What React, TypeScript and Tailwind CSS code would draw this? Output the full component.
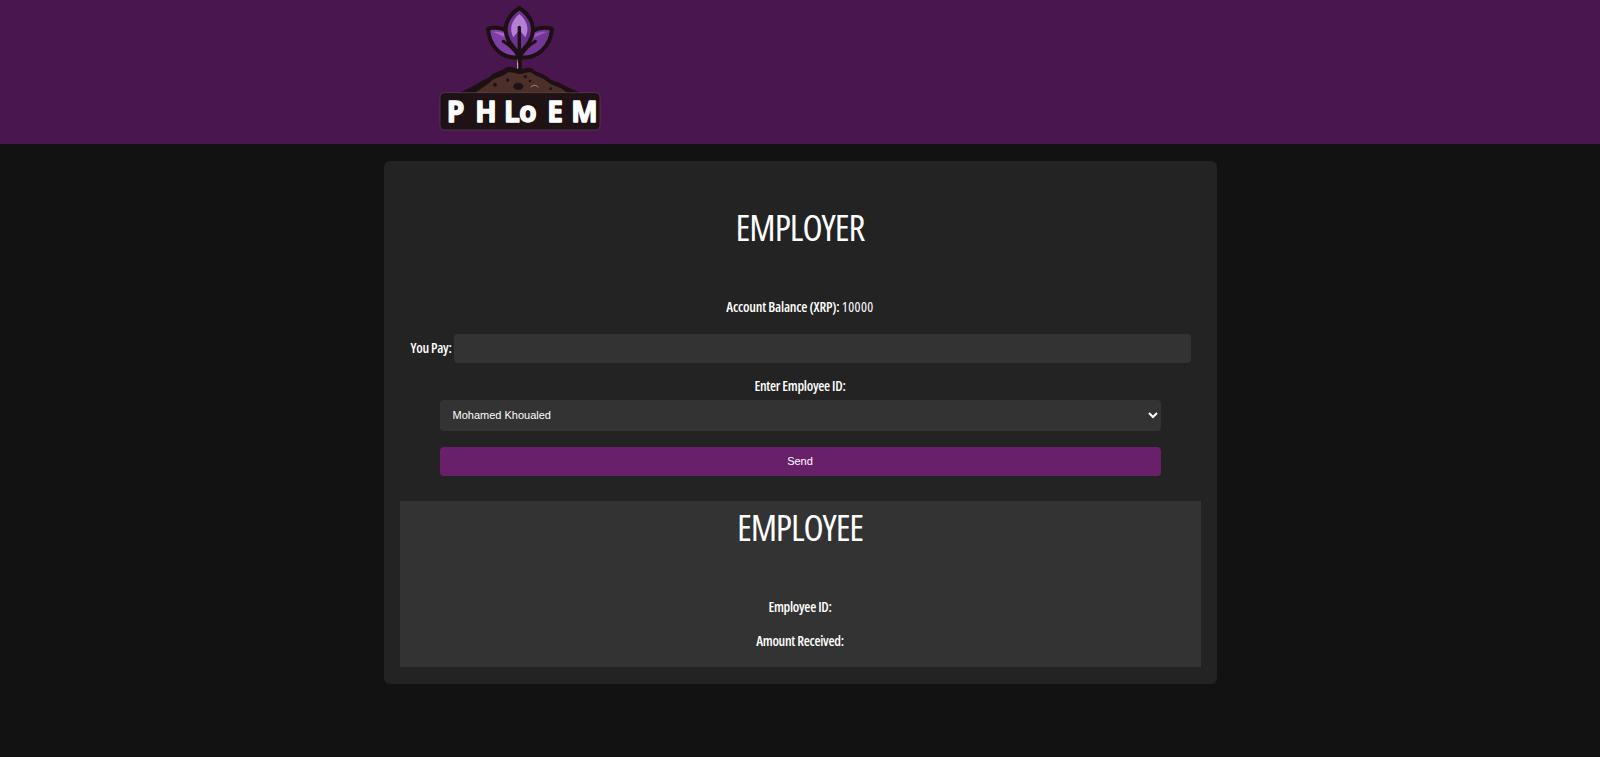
function Logo() {
  return (
    <svg width="200" height="144" viewBox="0 0 600 432" className="block">
      {/* soil mound */}
      <path d="M112 284 C135 268 155 262 175 250 C188 238 203 238 214 226 C226 214 245 216 258 202 C270 196 284 206 298 208 C310 210 322 198 338 206 C350 220 368 218 384 232 C397 246 414 244 432 256 C450 266 468 270 488 284 Z" fill="#1c1013" />
      <path d="M162 282 C186 262 203 256 220 238 C236 230 248 230 262 218 C275 214 288 222 300 222 C315 222 325 212 338 220 C350 232 365 230 380 244 C394 256 410 258 428 268 L444 282 Z" fill="#4d2f2a" />
      <ellipse cx="295" cy="259" rx="15" ry="11" fill="#1f1214" />
      <circle cx="225" cy="254" r="6" fill="#1f1214" />
      <circle cx="263" cy="240" r="5" fill="#1f1214" />
      <circle cx="316" cy="230" r="5" fill="#1f1214" />
      <circle cx="330" cy="243" r="4" fill="#1f1214" />
      <circle cx="392" cy="266" r="4" fill="#1f1214" />
      <path d="M332 262 C338 254 348 254 355 262" fill="none" stroke="#b8a398" strokeWidth="2.5" />
      {/* stem */}
      <path d="M298 150 L298 210" stroke="#1c1013" strokeWidth="15" />
      <path d="M293 178 L293 206" stroke="#d9c9cf" strokeWidth="3" />
      {/* side leaves */}
      <path d="M204 86 C250 74 292 100 298 172 C245 178 208 140 204 86 Z" fill="#7f3da6" stroke="#1c1013" strokeWidth="12" strokeLinejoin="round" />
      <path d="M396 86 C350 74 304 100 298 172 C352 178 392 140 396 86 Z" fill="#733598" stroke="#1c1013" strokeWidth="12" strokeLinejoin="round" />
      <path d="M220 96 C245 92 268 104 280 128 C258 112 238 104 220 96 Z" fill="#a866cc" />
      <path d="M380 96 C355 92 332 104 320 128 C342 112 362 104 380 96 Z" fill="#9a58bd" />
      {/* centre leaf */}
      <path d="M298 24 C335 48 350 85 330 122 C320 140 306 152 298 162 C290 152 276 140 266 122 C246 85 261 48 298 24 Z" fill="#6b318f" stroke="#1c1013" strokeWidth="12" strokeLinejoin="round" />
      <path d="M298 42 C320 60 330 85 316 112 L298 90 L280 112 C266 85 276 60 298 42 Z" fill="#b67fd6" />
      {/* veins */}
      <path d="M298 82 L298 185" stroke="#1c1013" strokeWidth="10" strokeLinecap="round" />
      <path d="M298 174 C285 150 268 134 250 124 M298 174 C311 150 328 134 346 124" fill="none" stroke="#1c1013" strokeWidth="9" strokeLinecap="round" />
      {/* name plate */}
      <rect x="60" y="278" width="480" height="112" rx="12" fill="#1f1214" stroke="#5a4a55" strokeWidth="2" />
      <text x="80 166 252 298 382 454" y="366" fill="#ffffff" stroke="#ffffff" strokeWidth="4" strokeLinejoin="round" fontFamily="'Open Sans', sans-serif" fontWeight="700" fontSize="84" className="[font-stretch:90%]">
        PHLoEM
      </text>
    </svg>
  );
}

export default function App() {
  return (
    <div className="min-h-screen bg-[#121212] text-white font-['Open_Sans',sans-serif] [font-stretch:75%]">
      <header className="h-[144px] bg-[#4a164f] pl-[420px]">
        <Logo />
      </header>

      <main className="w-[833px] mx-auto mt-[17px] bg-[#232323] rounded-md px-4 pt-4 pb-[17px] flex flex-col items-center">
        <h1 className="mt-[22px] text-[37px] leading-[55px] tracking-[-1px]">EMPLOYER</h1>
        <p className="mt-[43px] text-sm font-semibold leading-5 tracking-[-0.2px]">
          Account Balance (XRP): <span className="font-normal tracking-[0.4px]">10000</span>
        </p>

        <div className="mt-[17px] w-full flex items-center pl-[11px] pr-[10px]">
          <label className="text-sm font-semibold mr-[2px] mb-[2px] whitespace-nowrap tracking-[-0.3px]">You Pay:</label>
          <input type="text" className="flex-1 h-[29px] rounded bg-[#333333] outline-none px-3" />
        </div>

        <label className="mt-[13px] text-sm font-semibold leading-5 tracking-[-0.3px]">Enter Employee ID:</label>
        <select
          defaultValue="Mohamed Khoualed"
          className="mt-[4px] w-[721px] h-[31px] rounded bg-[#333333] px-[9px] pb-[2px] text-[11px] [font-stretch:100%] font-['Liberation_Sans',sans-serif] text-white outline-none"
        >
          <option>Mohamed Khoualed</option>
        </select>

        <button className="mt-[16px] w-[721px] h-[29px] rounded bg-[#68206a] text-[11px] [font-stretch:100%] font-['Liberation_Sans',sans-serif] text-white">
          Send
        </button>

        <section className="mt-[25px] w-full h-[166px] bg-[#333333] flex flex-col items-center">
          <h2 className="mt-[-2px] text-[37px] leading-[55px] tracking-[-1.1px]">EMPLOYEE</h2>
          <p className="mt-[43px] text-sm font-semibold leading-5 tracking-[-0.3px]">Employee ID:</p>
          <p className="mt-[14px] text-sm font-semibold leading-5 tracking-[-0.3px]">Amount Received:</p>
        </section>
      </main>
    </div>
  );
}
